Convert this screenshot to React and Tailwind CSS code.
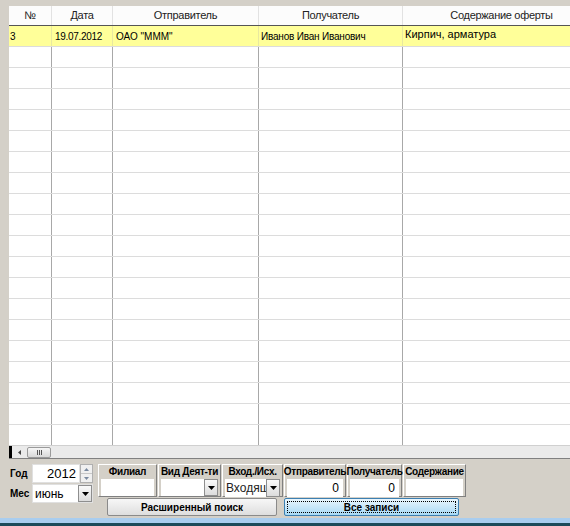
import React from "react";

const cols = [
  { w: "w-[43px]", title: "№" },
  { w: "w-[61px]", title: "Дата" },
  { w: "w-[146px]", title: "Отправитель" },
  { w: "w-[144px]", title: "Получатель" },
  { w: "w-[198px]", title: "Содержание оферты" },
];

const emptyRows = Array.from({ length: 19 });

const DropBtn = () => (
  <div className="w-[14px] shrink-0 h-full border border-[#8e8e8e] bg-gradient-to-b from-[#fafafa] to-[#dcdcdc] flex items-center justify-center">
    <svg width="7" height="4" viewBox="0 0 7 4">
      <path d="M0 0h7L3.5 4z" fill="#000" />
    </svg>
  </div>
);

const Group = ({ title, w, children }) => (
  <div className={`${w} h-[33px] shrink-0 border border-t-white border-l-white border-r-[#808080] border-b-[#808080] flex flex-col items-center px-[2px]`}>
    <div className="text-[10px] font-bold leading-[12px] mt-[1px] text-black whitespace-nowrap tracking-[-0.3px]">{title}</div>
    <div className="w-full h-[18px] mt-[1px]">{children}</div>
  </div>
);

export default function App() {
  return (
    <div
      className="w-[570px] h-[526px] bg-[#d4d0c8] overflow-hidden flex flex-col"
      style={{ fontFamily: "'Liberation Sans', Arial, sans-serif" }}
    >
      <div className="pl-[9px] pt-[6px]">
        {/* Grid */}
        <div className="h-[453px] bg-white flex flex-col border-b border-[#808080] overflow-hidden">
          <div className="flex h-[20px] bg-[#fcfcfc] border-b border-[#555] shrink-0">
            {cols.map((c, i) => (
              <div
                key={i}
                className={`${c.w} shrink-0 border-r border-[#e2e2e2] text-[11px] tracking-[-0.3px] text-[#222] flex items-center justify-center`}
              >
                {c.title}
              </div>
            ))}
          </div>
          <div className="flex-1 overflow-hidden">
            <div className="flex h-[21px] bg-[#ffff99] border-b border-[#dcdcdc] text-[10px] text-black">
              <div className="w-[43px] shrink-0 border-r border-[#e8e8a0] flex items-center pl-[1px]">3</div>
              <div className="w-[61px] shrink-0 border-r border-[#e8e8a0] flex items-center pl-[3px] tracking-[-0.3px]">19.07.2012</div>
              <div className="w-[146px] shrink-0 border-r border-[#e8e8a0] flex items-center pl-[3px]">ОАО "МММ"</div>
              <div className="w-[144px] shrink-0 border-r border-[#e8e8a0] flex items-center pl-[2px] tracking-[-0.2px]">Иванов Иван Иванович</div>
              <div className="w-[198px] shrink-0 text-[11px] pl-[2px] pt-[2px] leading-[13px]">Кирпич, арматура</div>
            </div>
            {emptyRows.map((_, r) => (
              <div key={r} className="flex h-[21px] border-b border-[#dcdcdc]">
                <div className="w-[43px] shrink-0 border-r border-[#a8a8a8]" />
                <div className="w-[61px] shrink-0 border-r border-[#a8a8a8]" />
                <div className="w-[146px] shrink-0 border-r border-[#a8a8a8]" />
                <div className="w-[144px] shrink-0 border-r border-[#a8a8a8]" />
                <div className="w-[198px] shrink-0" />
              </div>
            ))}
          </div>
          {/* horizontal scrollbar */}
          <div className="h-[13px] shrink-0 bg-[#eaeaea] border-t border-[#d0d0d0] flex items-center">
            <div className="w-[3px] h-full bg-black" />
            <div className="w-[15px] flex items-center justify-center">
              <svg width="3" height="5" viewBox="0 0 3 5">
                <path d="M3 0v5L0 2.5z" fill="#444" />
              </svg>
            </div>
            <div className="w-[24px] h-[11px] rounded-[2px] border border-[#9a9a9a] bg-gradient-to-b from-[#f6f6f6] to-[#d8d8d8] flex items-center justify-center gap-[1px]">
              <div className="w-[1px] h-[5px] bg-[#555]" />
              <div className="w-[1px] h-[5px] bg-[#555]" />
              <div className="w-[1px] h-[5px] bg-[#555]" />
            </div>
          </div>
        </div>
      </div>

      {/* bottom panel */}
      <div className="flex-1 flex pl-[10px] pt-[5px]">
        <div className="flex flex-col gap-[1px] w-[85px]">
          <div className="flex items-center h-[19px]">
            <span className="w-[22px] text-[10px] font-bold">Год</span>
            <div className="w-[48px] h-[19px] bg-white border border-[#e0e0e0] text-[13px] flex items-center justify-end pr-[3px]">2012</div>
            <div className="w-[13px] h-[19px] flex flex-col border border-[#b0b0b0] bg-[#f0f0f0]">
              <div className="flex-1 flex items-center justify-center border-b border-[#c8c8c8]">
                <svg width="5" height="3" viewBox="0 0 5 3"><path d="M0 3h5L2.5 0z" fill="#7a8aa0" /></svg>
              </div>
              <div className="flex-1 flex items-center justify-center">
                <svg width="5" height="3" viewBox="0 0 5 3"><path d="M0 0h5L2.5 3z" fill="#7a8aa0" /></svg>
              </div>
            </div>
          </div>
          <div className="flex items-center h-[19px]">
            <span className="w-[22px] text-[10px] font-bold">Мес</span>
            <div className="w-[61px] h-[19px] bg-white border border-[#e0e0e0] flex items-center">
              <span className="flex-1 text-[12px] pl-[2px]">июнь</span>
              <DropBtn />
            </div>
          </div>
        </div>
        <div className="flex flex-col ml-[3px]">
          <div className="flex gap-[1px]">
            <Group title="Филиал" w="w-[59px]">
              <div className="h-full bg-white" />
            </Group>
            <Group title="Вид Деят-ти" w="w-[63px]">
              <div className="h-full bg-white flex justify-end">
                <DropBtn />
              </div>
            </Group>
            <Group title="Вход./Исх." w="w-[61px]">
              <div className="h-full bg-white flex items-center">
                <span className="flex-1 text-[12px] text-[#222] overflow-hidden whitespace-nowrap pl-[1px]">Входящ</span>
                <DropBtn />
              </div>
            </Group>
            <Group title="Отправитель" w="w-[62px]">
              <div className="h-full bg-white text-[12px] flex items-center justify-end pr-[4px]">0</div>
            </Group>
            <Group title="Получатель" w="w-[55px]">
              <div className="h-full bg-white text-[12px] flex items-center justify-end pr-[4px]">0</div>
            </Group>
            <Group title="Содержание" w="w-[63px]">
              <div className="h-full bg-white" />
            </Group>
          </div>
          <div className="flex mt-[1px] ml-[9px] gap-[7px]">
            <div className="w-[170px] h-[18px] rounded-[2px] border border-[#8a8a8a] bg-gradient-to-b from-[#f7f7f7] to-[#dedede] text-[10px] font-bold flex items-center justify-center">
              Расширенный поиск
            </div>
            <div className="w-[175px] h-[18px] rounded-[2px] border border-[#3c7fb1] bg-gradient-to-b from-[#eaf6fd] to-[#a7d9f5] p-[2px]">
              <div className="w-full h-full border border-dotted border-black text-[10px] font-bold flex items-center justify-center">
                Все записи
              </div>
            </div>
          </div>
        </div>
      </div>
      <div className="h-[8px] shrink-0 flex flex-col">
        <div className="h-[5px] bg-[#a9cdef]" />
        <div className="flex-1 bg-[#1c4a5a]" />
      </div>
    </div>
  );
}
